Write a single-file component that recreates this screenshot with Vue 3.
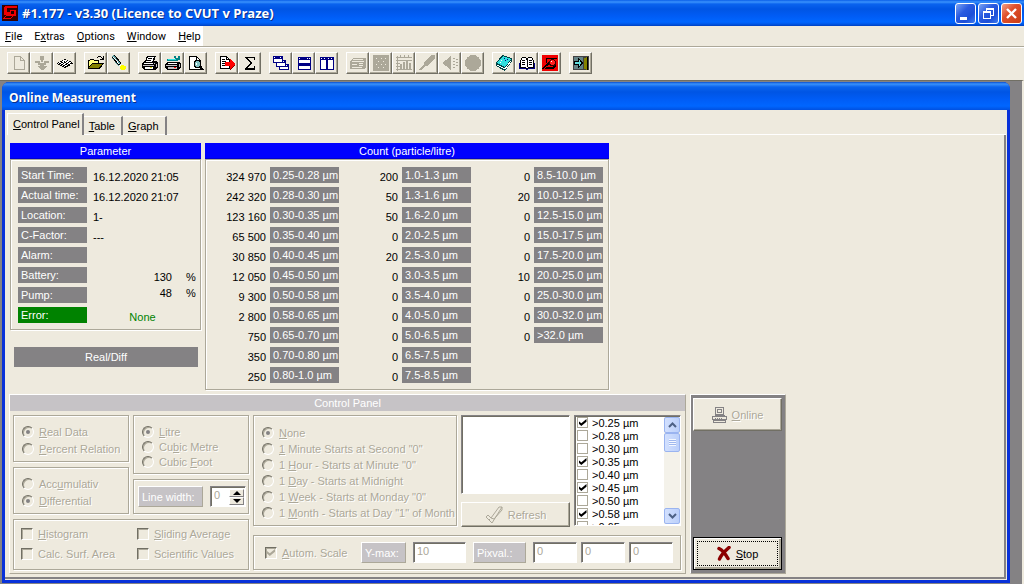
<script setup>
import { h, ref } from 'vue'

// Renders a caption whose access key is marked with "&".
const Caption = (props) => {
  const at = props.text.indexOf('&')
  if (at < 0) return h('span', props.text)
  return h('span', [props.text.slice(0, at), h('u', props.text[at + 1]), props.text.slice(at + 2)])
}
Caption.props = ['text']

const menus = ['&File', 'E&xtras', '&Options', '&Window', '&Help']

const G = '#aca899'
const toolGroups = [
  [
    { label: 'New', off: true, art: `<path d="M3.500 1.500h6l4 4v9h-10zM9.500 1.500v4h4" fill="none" stroke="${G}"/>` },
    { label: 'Load', off: true, art: `<path d="M6 1h4v4H6zM7 5h2v2H7zM1 6h5v2h4V6h5v2h-3v2h-2v1h3l-4 4h-2l-4-4h3v-1H4V8H1z" fill="${G}"/>` },
    { label: 'Grid', art: `<path d="M8 4l8 4-8 5-8-5z" fill="#fff"/><path d="M7 4h2v1H7zM5 5h1v1H5zM7 6h1v1H7zM10 5h1v1h-1zM3 6h2v1H3zM9 6h1v1H9zM12 6h2v1h-2zM1 7h1v1H1zM4 7h2v1H4zM7 7h2v1H7zM11 7h1v1h-1zM14 7h1v1h-1zM0 8h1v1H0zM2 8h2v1H2zM6 8h1v1H6zM9 8h2v1H9zM13 8h3v1h-3zM1 9h2v1H1zM4 9h2v1H4zM8 9h2v1H8zM11 9h2v1h-2zM3 10h2v1H3zM6 10h2v1H6zM10 10h3v1h-3zM5 11h2v1H5zM8 11h3v1H8zM7 12h2v1H7z"/>` },
  ],
  [
    { label: 'Open', art: `<path d="M0 14V5h1l1-1h3l1 1h5v3h5l-4 6z"/><path d="M1 6h1V5h3l1 1h4v2H4l-3 4z" fill="#ffff80"/><path d="M4 9h10l-3 4H1z" fill="#848200"/><path d="M9 2h1V1h3v1h1v1h1V1h1v4h-4V4h2V3h-1V2h-3v1H9z"/>` },
    { label: 'Configure', art: `<path d="M1 1l2-1 7 8-3 3-6-8z" fill="#63a2a4"/><path d="M2 2l7 8" stroke="#fff" fill="none"/><path d="M1 2l7 8M3 0l7 8M8 10l2-2" stroke="#000" fill="none"/><path d="M10 10h3v1h2v3h-1v1h-4v-1H9v-3h1z" fill="#ffff00"/><path d="M8 10h2v1H8z" fill="#fff"/>` },
  ],
  [
    { label: 'Print', art: `<path d="M5 1h9l-2 5h2l2 2v4l-3 3H2l-2-2V8l3-2z"/><path d="M6 2h6l-2 5H4z" fill="#fff"/><path d="M6 3.500h4M5 5.500h4" stroke="#000"/><path d="M2 8h9v1H2zM3 12h8v2H3z" fill="#fff"/><path d="M1 10h11v1H1zM12 8h1v1h-1zM14 9h1v3h-1z" fill="#c6c3c6"/><path d="M8 12h2v1H8z" fill="#dddd00"/>` },
    { label: 'Printer setup', art: `<path d="M3 7h10l3 1v4l-3 3H2l-2-2V9z"/><path d="M3 8h9v1H3z" fill="#fff"/><path d="M1 10h11v1H1zM3 12h9v2H3zM14 9h1v3h-1z" fill="#c6c3c6"/><path d="M2 4h8V3H9V1h2v2h2V1h2v4h-2v1H2z" fill="#008284"/><path d="M3 4h8v1H3z" fill="#31dfde"/><path d="M9 12h2v1H9z" fill="#f00"/>` },
    { label: 'Preview', art: `<path d="M1.500 1.500h7l4 4v9h-11z" fill="#fff" stroke="#000"/><path d="M8.500 1.500v4h4" fill="none" stroke="#000"/><circle cx="9.500" cy="9" r="3.500" fill="#84c3c6" stroke="#000"/><path d="M12 11l3 4" stroke="#000" stroke-width="2"/><path d="M8 8h1v2H8z" fill="#fff"/>` },
  ],
  [
    { label: 'Export', art: `<path d="M1.500 1.500h6l3 3v9h-9z" fill="#fff" stroke="#000"/><path d="M7.500 1.500v3h3M3 4.500h3M3 6.500h4M3 8.500h3M3 10.500h3" fill="none" stroke="#000"/><path d="M6 7h5V4l5 5-5 5v-3H6z" fill="#f00"/><path d="M11 14l5-5v1l-4 5h-1z" fill="#840000"/>` },
    { label: 'Statistics', art: `<path d="M3 2h10v3h-1V3H6l4 5-5 5h7v-2h1v4H3v-2l5-5-5-5z"/>` },
  ],
  [
    { label: 'Cascade', art: `<path d="M0 1h10v7H0zM3 5h10v7H3zM6 9h10v6H6z" fill="#000084"/><path d="M1 4h8v3H1zM4 8h8v3H4zM7 12h8v2H7z" fill="#fff"/><path d="M1 2h1v1H1zM7 2h1v1H7zM4 6h1v1H4zM10 6h1v1h-1zM7 10h1v1H7zM13 10h1v1h-1z" fill="#fff"/>` },
    { label: 'Tile horizontally', art: `<path d="M2 2h13v13H2z" fill="#000084"/><path d="M3 5h11v3H3zM3 11h11v3H3zM3 3h1v1H3zM11 3h1v1h-1zM13 3h1v1h-1z" fill="#fff"/>` },
    { label: 'Tile vertically', art: `<path d="M1 2h14v13H1z" fill="#000084"/><path d="M2 5h5v9H2zM9 5h5v9H9zM2 3h1v1H2zM5 3h1v1H5zM9 3h1v1H9zM12 3h1v1h-1z" fill="#fff"/>` },
  ],
  [
    { label: 'Device', off: true, art: `<path d="M0 6l3-3h13v9l-2 2H0z" fill="${G}"/><path d="M3 4.500h10M2 6.500h12M2 9.500h5M9 8.500h4M9 10.500h4M2 12.500h10" stroke="#eeeade" fill="none"/>` },
    { label: 'Raster', off: true, art: `<path d="M0 0h16v16H0z" fill="${G}"/><path d="M3 3h1v1H3zM8 3h1v1H8zM12 3h1v1h-1zM5 6h1v1H5zM10 6h1v1h-1zM3 9h1v1H3zM8 9h1v1H8zM12 9h1v1h-1zM5 12h1v1H5zM10 12h1v1h-1z" fill="#eeeade"/>` },
    { label: 'Chart', off: true, art: `<path d="M0 2h16v1H0zM0 5h16v1H0zM0 14h16v1H0zM1 1h1v15H1zM4 9h2v5H4zM7 7h2v7H7zM10 5h2v9h-2zM13 8h2v6h-2zM4 0h1v3H4zM8 0h1v3H8zM12 0h1v3h-1zM0 8h4v1H0zM0 11h4v1H0z" fill="${G}"/>` },
    { label: 'Pen', off: true, art: `<path d="M12 0h4v3l-7 8H6l-4 4H0l5-6V7z" fill="${G}"/>` },
    { label: 'Sound', off: true, art: `<path d="M0 8l4-3 5-4v14l-5-4z" fill="${G}"/><path d="M11 3h2v1h-2zM14 4h2v1h-2zM11 6h2v1h-2zM14 7h2v1h-2zM11 9h2v1h-2zM14 10h2v1h-2zM11 12h2v1h-2z" fill="${G}"/>` },
    { label: 'Record', off: true, art: `<circle cx="8" cy="8" r="8" fill="${G}"/>` },
  ],
  [
    { label: 'Manual', art: `<path d="M0 8L6 0l10 3v3l-7 10-9-5z" fill="#004244"/><path d="M1 8l6-7 8 3-6 8z" fill="#31dfde"/><path d="M1 10l8 4 6-8" stroke="#fff" fill="none"/><path d="M8 3h1v1H8zM11 4h1v1h-1zM9 5h1v1H9z" fill="#000084"/><path d="M5 5h1v1H5zM4 7h1v1H4z" fill="#fff"/>` },
    { label: 'Contents', art: `<path d="M1.500 12.500v-7l2-3h3l1.500 2 1.500-2h3l2 3v7h-5l-1.500 1-1.500-1z" fill="#fff" stroke="#000"/><path d="M8 4v8M3 5.500h3M3 7.500h3M3 9.500h3M10 5.500h3M10 7.500h3M10 9.500h3" stroke="#000" fill="none"/><path d="M0 8h1v5h6v1h2v-1h6V8h1v6H9v1H7v-1H0z" fill="#000084"/>` },
    { label: 'About', art: `<path d="M0 0h16v16H0z" fill="#f00000"/><path d="M4 3h11v1H5v4H4zM3 10l4-3h1v1l-3 3-4 3H0v-1zM4 12h6l3-2 1 1-3 3H2z"/><circle cx="10.500" cy="7.500" r="3" fill="#ff2020" stroke="#300" stroke-width="1"/><path d="M9 6h1v1H9z" fill="#fff"/>` },
  ],
  [
    { label: 'Exit', art: `<path d="M0 1h16v14H0z" fill="#424142"/><path d="M1 2h9v12H1z" fill="#638284"/><path d="M1.500 6.500h4v-3l4 4.500-4 4.500v-3h-4z" fill="#63dfde" stroke="#000"/><path d="M11 3l3-1v13l-3-1z" fill="#848200"/><path d="M14 2h1v13h-1z" fill="#000"/>` },
  ],
]

const tabs = ['&Control Panel', '&Table', '&Graph']
const activeTab = ref(0)

const params = [
  { name: 'Start Time:', value: '16.12.2020 21:05' },
  { name: 'Actual time:', value: '16.12.2020 21:07' },
  { name: 'Location:', value: '1-' },
  { name: 'C-Factor:', value: '---' },
  { name: 'Alarm:', value: '' },
  { name: 'Battery:', value: '130', unit: '%' },
  { name: 'Pump:', value: '48', unit: '%', raised: true },
]

const counts = [
  [
    ['324 970', '0.25-0.28 µm'], ['242 320', '0.28-0.30 µm'], ['123 160', '0.30-0.35 µm'],
    ['65 500', '0.35-0.40 µm'], ['30 850', '0.40-0.45 µm'], ['12 050', '0.45-0.50 µm'],
    ['9 300', '0.50-0.58 µm'], ['2 800', '0.58-0.65 µm'], ['750', '0.65-0.70 µm'],
    ['350', '0.70-0.80 µm'], ['250', '0.80-1.0 µm'],
  ],
  [
    ['200', '1.0-1.3 µm'], ['50', '1.3-1.6 µm'], ['50', '1.6-2.0 µm'], ['0', '2.0-2.5 µm'],
    ['20', '2.5-3.0 µm'], ['0', '3.0-3.5 µm'], ['0', '3.5-4.0 µm'], ['0', '4.0-5.0 µm'],
    ['0', '5.0-6.5 µm'], ['0', '6.5-7.5 µm'], ['0', '7.5-8.5 µm'],
  ],
  [
    ['0', '8.5-10.0 µm'], ['20', '10.0-12.5 µm'], ['0', '12.5-15.0 µm'], ['0', '15.0-17.5 µm'],
    ['0', '17.5-20.0 µm'], ['10', '20.0-25.0 µm'], ['0', '25.0-30.0 µm'], ['0', '30.0-32.0 µm'],
    ['0', '>32.0 µm'],
  ],
]

const dataModes = ['&Real Data', '&Percent Relation']
const sumModes = ['Acc&umulativ', '&Differential']
const volumes = ['&Litre', 'Cu&bic Metre', 'Cubic &Foot']
const options = ['&Histogram', '&Sliding Average', 'Calc. Surf. Area', 'Scientific Values']
const starts = [
  '&None', '&1 Minute Starts at Second "0"', '1 &Hour - Starts at Minute "0"',
  '1 &Day - Starts at Midnight', '1 &Week - Starts at Monday "0"', '1 &Month - Starts at Day "1" of Month',
]
const channels = ref([
  { name: '>0.25 µm', on: true }, { name: '>0.28 µm', on: false }, { name: '>0.30 µm', on: false },
  { name: '>0.35 µm', on: true }, { name: '>0.40 µm', on: false }, { name: '>0.45 µm', on: true },
  { name: '>0.50 µm', on: false }, { name: '>0.58 µm', on: true }, { name: '>0.65 µm', on: false },
])
</script>

<template>
  <div class="app">
    <header class="titlebar">
      <svg class="logo" viewBox="0 0 16 16" shape-rendering="crispEdges">
        <path d="M0 0h16v16H0z" fill="#300" />
        <path d="M3 1h12v2H5v4h3V5h6v6h-3l-3 3H1l3-4H2V3z" fill="#f00000" />
        <path d="M9 6h3v3H9zM4 11h6l-2 2H3z" fill="#200" />
      </svg>
      <h1>#1.177 - v3.30 (Licence to CVUT v Praze)</h1>
      <div class="winbtns">
        <button class="winbtn" aria-label="Minimize"><svg viewBox="0 0 19 19"><path d="M4 13h7v3H4z" fill="#fff" /></svg></button>
        <button class="winbtn" aria-label="Restore"><svg viewBox="0 0 19 19" shape-rendering="crispEdges"><path d="M7 4h8v8h-3v3H4V7h3zm1 2v1h4v4h2V6zM5 9v5h6V9z" fill="#fff" fill-rule="evenodd" /></svg></button>
        <button class="winbtn close" aria-label="Close"><svg viewBox="0 0 19 19"><path d="M5 5l9 9M14 5l-9 9" stroke="#fff" stroke-width="2.400" /></svg></button>
      </div>
    </header>

    <nav class="menubar">
      <div class="menus"><button v-for="m in menus" :key="m"><Caption :text="m" /></button></div>
    </nav>

    <div class="toolbar">
      <div v-for="(g, i) in toolGroups" :key="i" class="tools">
        <button v-for="t in g" :key="t.label" :aria-label="t.label" :disabled="t.off">
          <svg viewBox="0 0 16 16" shape-rendering="crispEdges" v-html="t.art"></svg>
        </button>
      </div>
    </div>

    <main class="desk">
      <section class="child">
        <h2 class="childtitle">Online Measurement</h2>
        <div class="childbody">
          <div class="tabs" role="tablist">
            <button v-for="(t, i) in tabs" :key="t" role="tab" :class="{ active: i === activeTab }" @click="activeTab = i"><Caption :text="t" /></button>
            <i class="tabline"></i>
          </div>
          <div class="page">
            <div class="upper">
              <div class="paramcol">
                <section>
                  <h3 class="head">Parameter</h3>
                  <table class="box params">
                    <colgroup><col class="cname" /><col /><col class="cunit" /></colgroup>
                    <tbody>
                      <tr v-for="p in params" :key="p.name">
                        <th><span>{{ p.name }}</span></th>
                        <td v-if="!p.unit" colspan="2">{{ p.value }}</td>
                        <template v-else>
                          <td class="num" :class="{ raised: p.raised }">{{ p.value }}</td>
                          <td class="unit" :class="{ raised: p.raised }">{{ p.unit }}</td>
                        </template>
                      </tr>
                      <tr>
                        <th><span class="error">Error:</span></th>
                        <td colspan="2" class="none">None</td>
                      </tr>
                    </tbody>
                  </table>
                </section>
                <div class="realdiff">Real/Diff</div>
              </div>
              <section class="countcol">
                <h3 class="head">Count (particle/litre)</h3>
                <div class="box counts">
                  <table v-for="(col, i) in counts" :key="i">
                    <tbody>
                      <tr v-for="r in col" :key="r[1]">
                        <td>{{ r[0] }}</td>
                        <th><span>{{ r[1] }}</span></th>
                      </tr>
                    </tbody>
                  </table>
                </div>
              </section>
            </div>

            <div class="lower">
              <section class="control">
                <h3 class="head grey">Control Panel</h3>
                <div class="settings">
                  <div class="left">
                    <div class="stack">
                      <fieldset disabled class="pair">
                        <label v-for="(o, i) in dataModes" :key="o"><input type="radio" name="data" :checked="i === 0" /><Caption :text="o" /></label>
                      </fieldset>
                      <fieldset disabled class="pair">
                        <label v-for="(o, i) in sumModes" :key="o"><input type="radio" name="sum" :checked="i === 1" /><Caption :text="o" /></label>
                      </fieldset>
                    </div>
                    <div class="stack">
                      <fieldset disabled class="triple">
                        <label v-for="(o, i) in volumes" :key="o"><input type="radio" name="vol" :checked="i === 0" /><Caption :text="o" /></label>
                      </fieldset>
                      <div class="group linewidth">
                        <label for="lw" class="tag">Line width:</label>
                        <div class="spin">
                          <input id="lw" type="text" value="0" disabled />
                          <div class="arrows">
                            <button aria-label="Increase"><svg viewBox="0 0 8 4"><path d="M0 4l4-4 4 4z" /></svg></button>
                            <button aria-label="Decrease"><svg viewBox="0 0 8 4"><path d="M0 0l4 4 4-4z" /></svg></button>
                          </div>
                        </div>
                      </div>
                    </div>
                    <fieldset disabled class="checks">
                      <label v-for="o in options" :key="o"><input type="checkbox" /><Caption :text="o" /></label>
                    </fieldset>
                  </div>
                  <div class="right">
                    <div class="rtop">
                      <fieldset disabled class="starts">
                        <label v-for="(o, i) in starts" :key="o"><input type="radio" name="start" :checked="i === 0" /><Caption :text="o" /></label>
                      </fieldset>
                      <div class="memo">
                        <textarea aria-label="Notes"></textarea>
                        <button class="btn" disabled>
                          <svg width="18" height="20" viewBox="0 0 18 20"><path d="M1 12l2-2 3 3L14 2h3L7 18zM4 15l1-1M6 13l3 1 8-9v-3" fill="none" stroke="#aca899" /></svg>
                          <span>Refresh</span>
                        </button>
                      </div>
                      <div class="list">
                        <div class="items">
                          <label v-for="c in channels" :key="c.name"><input v-model="c.on" type="checkbox" /><span>{{ c.name }}</span></label>
                        </div>
                        <div class="scroll">
                          <button aria-label="Scroll up"><svg viewBox="0 0 9 6"><path d="M1 5l3.500-3.500L8 5" fill="none" stroke="#4d6185" stroke-width="2" /></svg></button>
                          <i class="thumb"></i>
                          <button aria-label="Scroll down"><svg viewBox="0 0 9 6"><path d="M1 1l3.500 3.500L8 1" fill="none" stroke="#4d6185" stroke-width="2" /></svg></button>
                        </div>
                      </div>
                    </div>
                    <div class="group scale">
                      <label class="auto"><input type="checkbox" checked disabled /><Caption text="&amp;Autom. Scale" /></label>
                      <label for="ymax" class="tag ytag">Y-max:</label>
                      <input id="ymax" class="field" type="text" value="10" disabled />
                      <label for="px0" class="tag ptag">Pixval.:</label>
                      <div class="pix">
                        <input v-for="n in 3" :id="'px' + (n - 1)" :key="n" class="field" type="text" value="0" :aria-label="'Pixval ' + n" disabled />
                      </div>
                    </div>
                  </div>
                </div>
              </section>
              <div class="actions">
                <button class="btn online" disabled>
                  <svg width="15" height="16" viewBox="0 0 15 16" shape-rendering="crispEdges"><path d="M3.500.500h8v7h-8zM5.500 2.500h4v3h-4zM2.500 8.500h10M.500 9.500h14v3h-14zM1.500 15.500h12v-2h-12z" fill="none" stroke="#848284" /><path d="M3 11.500h7" stroke="#848284" stroke-dasharray="1 1" /></svg>
                  <Caption text="&amp;Online" />
                </button>
                <button class="btn stop">
                  <svg width="14" height="15" viewBox="0 0 14 15"><path d="M2 2.500C5 4 9 9 11 12.500M12 1.500C8 5 4 9 2.500 13" fill="none" stroke="#8c0000" stroke-width="3.500" stroke-linecap="round" /></svg>
                  <Caption text="&amp;Stop" />
                </button>
              </div>
            </div>
          </div>
        </div>
      </section>
    </main>
  </div>
</template>

<style>
body { background: #848284; }
</style>

<style scoped>
.app {
  --face: #eeeade;
  --dim: #aca899;
  --grey: #848284;
  display: flex;
  flex-direction: column;
  min-height: 100vh;
  background: var(--face);
  color: #000;
  font: 11px/16px "Liberation Sans", Arial, sans-serif;
}
.app *, .app *::before { box-sizing: border-box; }
button, input, textarea { font: inherit; color: inherit; margin: 0; padding: 0; border: 0; border-radius: 0; background: none; }
h1, h2, h3 { margin: 0; font: inherit; }
svg { display: block; }
table { border-spacing: 0; }
th { font-weight: normal; text-align: left; }
th, td { padding: 0; vertical-align: top; white-space: nowrap; }

.titlebar {
  display: flex;
  align-items: center;
  height: 26px;
  padding: 0 2px;
  background: linear-gradient(#0a5fe8, #3a92fc 2px, #0a63ee 4px, #0055e4 9px, #005cf5 16px, #0066ff 22px, #0058e8 24px, #0040c0);
  color: #fff;
}
.logo { width: 16px; height: 16px; }
h1, .childtitle { font: bold 12px/18px "Open Sans", "Noto Sans", sans-serif; text-shadow: 1px 1px #0a2f8a; white-space: nowrap; }
h1 { flex: 1; margin-left: 4px; font-size: 13px; }
.winbtns { display: flex; gap: 2px; }
.winbtn {
  width: 21px;
  height: 21px;
  border: 1px solid #fff;
  border-radius: 3px;
  background: linear-gradient(135deg, #7ba4f4, #2a5be0 40%, #1d4fd8 70%, #3f7df0);
}
.winbtn.close { background: linear-gradient(135deg, #f0a088, #e0502c 40%, #c83c14); }

.menubar { height: 22px; border-bottom: 1px solid #fff; box-shadow: inset 0 -1px var(--dim); }
.menus { display: inline-flex; gap: 12px; height: 20px; padding: 0 2px 0 5px; background: #fff; }
.menus button { font: 11px/22px Roboto, "Open Sans", sans-serif; }

.toolbar { display: flex; gap: 8px; height: 32px; padding: 4px 7px 0; }
.tools { display: flex; }
.tools button {
  width: 23px;
  height: 22px;
  padding: 2px 3px;
  border: 1px solid;
  border-color: #fff #716f64 #716f64 #fff;
  box-shadow: inset -1px -1px var(--dim);
}
.tools svg { width: 16px; height: 16px; }

.desk { flex: 1; display: flex; padding: 1px 12px 1px 2px; border-top: 1px solid #716f64; border-right: 2px solid var(--face); background: var(--grey); }
.child { flex: 1; min-width: 0; display: flex; flex-direction: column; border: solid #0831d9; border-width: 0 3px 3px; border-radius: 7px 7px 0 0; background: #0058ee; }
.childtitle {
  height: 28px;
  margin: 0 -3px;
  padding: 0 7px;
  line-height: 31px;
  border-radius: 7px 7px 0 0;
  color: #fff;
  background: linear-gradient(#0a4fd0, #3a92fc 2px, #0a63ee 5px, #0055e4 10px, #005cf5 17px, #0066ff 24px, #0050e0);
}
.childbody { flex: 1; display: flex; flex-direction: column; padding: 3px 1px 1px 0; background: var(--face); }
.tabs { display: flex; align-items: flex-end; height: 22px; padding-left: 2px; }
.tabs button { height: 19px; padding: 0 6px 0 5px; border-top: 1px solid #fff; border-right: 2px solid var(--grey); box-shadow: inset 0 -1px #fff; line-height: 17px; }
.tabs .active { height: 22px; padding: 0 2px 0 5px; border-left: 1px solid #fff; box-shadow: none; line-height: 19px; }
.tabline { flex: 1; border-bottom: 1px solid #fff; }
.page { flex: 1; display: flex; flex-direction: column; justify-content: space-between; gap: 4px; padding: 8px 0 3px 4px; border: solid var(--grey); border-width: 0 2px 2px 0; }

.upper { display: flex; gap: 4px; }
.head { height: 16px; background: #0000ff; color: #fff; text-align: center; line-height: 17px; border-bottom: 1px solid #0000d0; }
.head.grey { background: #c6c3c6; border-color: #c6c3c6; }
.box { border: 1px solid var(--dim); box-shadow: inset 1px 1px #fff, 1px 1px #fff; }
.paramcol, .countcol { display: flex; flex-direction: column; }
.paramcol { width: 191px; margin-left: 1px; gap: 17px; }
.countcol { width: 404px; }
.params { width: 100%; height: 171px; padding: 6px 0 3px 7px; table-layout: fixed; }
.params tr, .counts tr { height: 20px; }
.cname { width: 75px; }
.cunit { width: 28px; }
th span { display: block; height: 16px; margin-top: 1px; padding-left: 3px; background: var(--grey); color: #fff; line-height: 16px; }
.params th span { margin-right: 6px; }
td { padding-top: 2px; line-height: 18px; }
.params .num { text-align: right; }
.params .unit { padding-left: 14px; }
.params .raised { padding-top: 0; line-height: 14px; }
th .error { background: #008200; }
.params .none { padding-right: 8px; text-align: center; color: #008200; }
.realdiff { height: 20px; margin: 0 3px 0 4px; background: var(--grey); color: #fff; text-align: center; line-height: 20px; }
.counts { display: flex; height: 231px; padding: 6px 5px 0 1px; }
.counts table { flex: 1; table-layout: fixed; height: max-content; }
.counts td { padding-right: 4px; text-align: right; }
.counts th { width: 69px; }

.lower { display: flex; gap: 4px; }
.control { width: 677px; border: 1px solid; border-color: #fff var(--dim) var(--dim) #fff; color: var(--dim); }
.settings { display: flex; gap: 5px; padding: 4px 4px 3px 3px; text-shadow: 1px 1px #fff; }
fieldset, .group { min-width: 0; margin: 0; padding: 0; border: 1px solid var(--dim); box-shadow: inset 1px 1px #fff, 1px 1px #fff; }
.settings label { display: flex; align-items: center; white-space: nowrap; }
.left { display: grid; grid-template-columns: 116px 116px; gap: 5px 4px; }
.stack { display: flex; flex-direction: column; gap: 5px; }
.pair { height: 47px; padding: 7px 0 0 8px; }
.pair label { height: 17px; }
.triple { height: 59px; padding: 8px 0 0 8px; }
.triple label { height: 15px; }
input[type=radio], input[type=checkbox] { appearance: none; flex: none; display: grid; place-items: center; width: 12px; height: 12px; margin-right: 5px; border: 1px solid; border-color: #716f64 #fff #fff #716f64; }
input[type=radio] { border-radius: 50%; box-shadow: inset 1px 1px var(--dim); }
input[type=radio]:checked::before { content: ""; width: 4px; height: 4px; border-radius: 50%; background: var(--grey); }
input[type=checkbox] { box-shadow: inset 1px 1px var(--dim); }
input[type=checkbox]:checked::before { content: ""; width: 8px; height: 7px; background: currentColor; clip-path: polygon(0 30%, 35% 60%, 100% 0, 100% 40%, 35% 100%, 0 65%); }
.linewidth { display: flex; align-items: center; gap: 7px; height: 35px; padding-left: 4px; }
.tag { flex: none; width: 65px; height: 21px; padding-left: 3px; border: 1px solid; border-color: #fff var(--dim) var(--dim) #fff; background: #c6c3c6; color: #fff; text-shadow: none; }
.spin { display: flex; width: 36px; height: 21px; border: 1px solid; border-color: var(--grey) #fff #fff var(--grey); box-shadow: inset 1px 1px #716f64; background: #fff; }
.spin input { width: 18px; height: 16px; padding-left: 3px; }
.arrows { display: flex; flex-direction: column; width: 15px; margin: 2px 0 1px; }
.arrows button { flex: 1; display: grid; place-items: center; border: 1px solid; border-color: #fff var(--grey) var(--grey) #fff; background: var(--face); color: #000; }
.arrows svg { width: 8px; height: 4px; }
.checks { grid-column: span 2; display: grid; grid-template-columns: 116px 1fr; align-content: start; height: 51px; padding: 4px 0 0 7px; }
.checks label { height: 20px; }

.right { flex: 1; min-width: 0; display: flex; flex-direction: column; gap: 9px; }
.settings { gap: 4px; }
.rtop { display: flex; gap: 4px; height: 111px; }
.starts { width: 204px; padding: 9px 0 0 8px; }
.starts label { height: 16px; }
.memo { display: flex; flex-direction: column; justify-content: space-between; width: 109px; }
textarea { height: 79px; border: 1px solid; border-color: var(--grey) #fff #fff var(--grey); box-shadow: inset 1px 1px #716f64; background: #fff; resize: none; }
.btn { display: flex; align-items: center; justify-content: center; gap: 5px; background: var(--face); border: 1px solid; border-color: #fff #716f64 #716f64 #fff; box-shadow: inset -1px -1px var(--dim); }
.btn:disabled { color: var(--dim); text-shadow: 1px 1px #fff; }
.memo .btn { height: 25px; margin-bottom: -1px; }
.list { flex: 1; display: flex; overflow: hidden; border: 1px solid; border-color: var(--grey) #fff #fff var(--grey); box-shadow: inset 1px 1px #716f64; background: #fff; color: #000; text-shadow: none; }
.items { flex: 1; height: 109px; padding-left: 2px; overflow: hidden; }
.items label { height: 13px; }
.items input[type=checkbox] { width: 11px; height: 11px; margin-right: 4px; border-color: var(--dim); box-shadow: none; }
.scroll { display: flex; flex-direction: column; width: 16px; margin: 1px 0; background: #f4f2ea; }
.scroll button, .thumb { display: grid; place-items: center; height: 16px; border: 1px solid #9ab4f0; border-radius: 2px; background: linear-gradient(90deg, #d2e0fe, #bcd0fa); }
.scroll svg { width: 9px; height: 6px; }
.thumb { height: 19px; margin-bottom: auto; }
.thumb::before { content: ""; width: 7px; height: 7px; background: repeating-linear-gradient(#f4f8ff 0 1px, #a0b8ee 1px 2px); }
.scale { display: flex; align-items: center; height: 35px; padding-left: 11px; }
.auto { flex: none; width: 96px; }
.ytag { width: 45px; margin-right: 7px; }
.field { height: 21px; padding: 0 3px 3px; border: 1px solid; border-color: var(--grey) #fff #fff var(--grey); box-shadow: inset 1px 1px #716f64; background: #fff; }
#ymax { flex: none; width: 53px; margin-right: 7px; }
.ptag { width: 53px; margin-right: 7px; }
.pix { flex: 1; min-width: 0; display: flex; gap: 4px; padding-right: 7px; }
.pix .field { flex: 1; width: 0; min-width: 0; }

.actions { display: flex; flex-direction: column; justify-content: space-between; width: 96px; padding: 3px 3px 3px 2px; border: 1px solid; border-color: #fff var(--dim) var(--dim) #fff; background: var(--grey); }
.actions .btn { height: 33px; }
.stop { border-color: #000; box-shadow: inset 1px 1px #fff, inset -2px -2px var(--dim); outline: 1px dotted #000; outline-offset: -5px; }
</style>
